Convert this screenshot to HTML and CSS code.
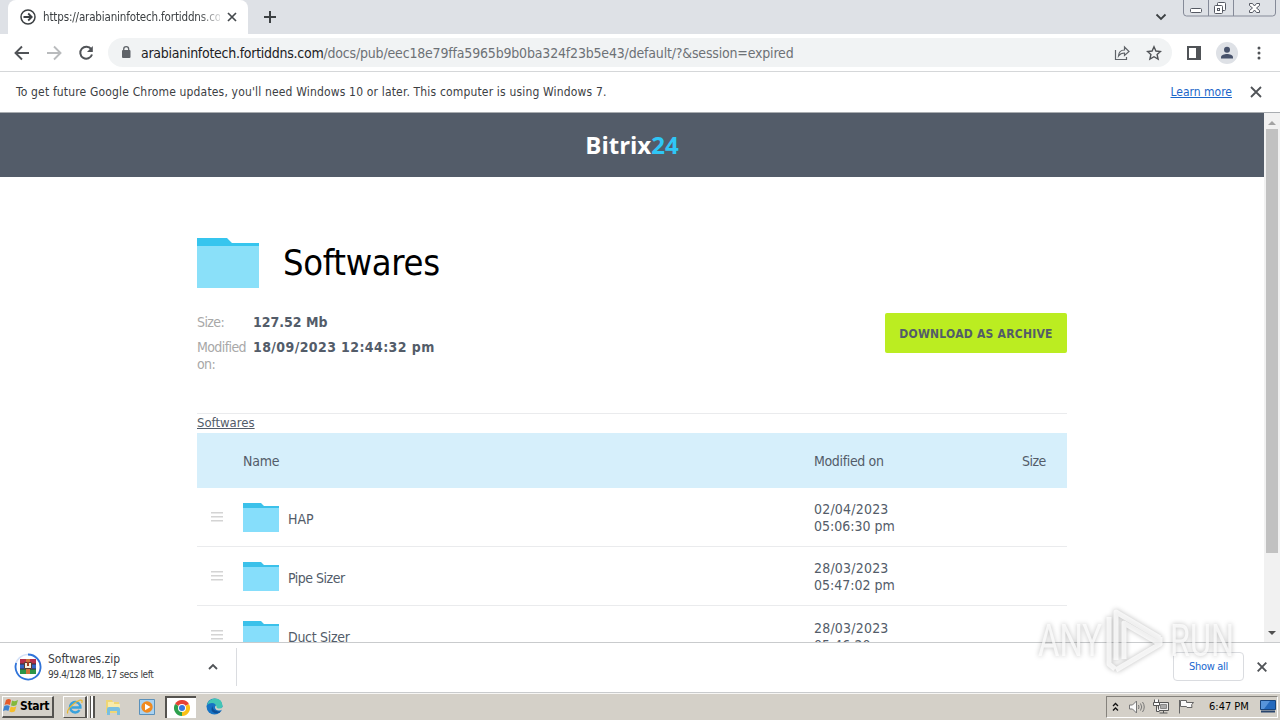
FILE: index.html
```html
<!DOCTYPE html>
<html lang="en">

<head>
    <meta charset="UTF-8">
    <meta name="viewport" content="width=device-width, initial-scale=1.0">
    <title>Softwares</title>
    <link rel="stylesheet" href="styles.css">
</head>

<body>
    <div class="screen">
        <!-- Tabs -->
        <div class="tabs">
            <div class="tab">
                <svg width="16" height="16" viewBox="0 0 16 16" fill="none" stroke="#3c4043" stroke-width="1.8"><circle cx="8" cy="8" r="7" stroke-width="1.5"/><path d="M3.5 8h8M8.2 4.5L11.7 8l-3.5 3.5"/></svg>
                <span class="tab-title">https://arabianinfotech.fortiddns.co</span>
                <svg width="10" height="10" viewBox="0 0 10 10" stroke="#45494d" stroke-width="1.7"><path d="M1 1l8 8M9 1L1 9"/></svg>
            </div>
            <svg class="new-tab" width="12" height="12" viewBox="0 0 12 12" stroke="#3c4043" stroke-width="2"><path d="M6 0v12M0 6h12"/></svg>
            <svg class="tab-search" width="12" height="8" viewBox="0 0 12 8" fill="none" stroke="#3c4043" stroke-width="1.8"><path d="M1.5 1.5L6 6l4.5-4.5"/></svg>
            <svg class="window-buttons" width="94" height="18" viewBox="0 0 94 18" fill="none" stroke="#858a98">
                <path d="M.5 0v13q0 3 3 3h86q3 0 3-3V0M25.5 0v16M50.5 0v16"/>
                <g stroke="#555963" fill="#fff"><rect x="7.5" y="8.5" width="11" height="4" rx="1"/><rect x="34.5" y="2.5" width="8" height="8" rx="1"/><rect x="31.5" y="5.5" width="8" height="8" rx="1"/><rect x="34.5" y="8.5" width="2" height="2"/><path d="M66.5 3.5h3l2 2.500 2-2.500h3v2L73.500 8l3 2.500v2h-3l-2-2.500-2 2.500h-3v-2l3-2.500-3-2.500z"/></g>
            </svg>
        </div>

        <!-- Address bar -->
        <div class="toolbar">
            <div class="nav">
                <svg width="16" height="16" viewBox="0 0 16 16" fill="none" stroke="#505357" stroke-width="1.9"><path d="M15 8H2M8 1.5L1.5 8 8 14.5"/></svg>
                <svg width="16" height="16" viewBox="0 0 16 16" fill="none" stroke="#b9bbbd" stroke-width="1.9"><path d="M1 8h13M8 1.5L14.5 8 8 14.5"/></svg>
                <svg width="16" height="16" viewBox="0 0 16 16" fill="none" stroke="#505357" stroke-width="2"><path d="M13.2 4.2A6 6 0 1 0 14 9.5"/><path d="M14.8 1v6H9z" fill="#505357" stroke="none"/></svg>
            </div>
            <div class="address">
                <svg width="10" height="13" viewBox="0 0 10 13"><rect x="1" y="4" width="8.5" height="8" rx="1" fill="#5f6368"/><path d="M2.7 5V3.2a2.500 2.500 0 0 1 5 0V5" fill="none" stroke="#5f6368" stroke-width="1.3"/></svg>
                <span class="url"><span class="host">arabianinfotech.fortiddns.com</span><span class="path">/docs/pub/eec18e79ffa5965b9b0ba324f23b5e43/default/?&amp;session=expired</span></span>
                <svg class="share" width="16" height="16" viewBox="0 0 16 16" fill="none" stroke="#5f6368" stroke-width="1.2"><path d="M1.5 5v9.500h11V12M4.500 11c.3-4 2.500-6 6-6V2l4.500 4.500-4.500 4V8c-2.500 0-4.500.8-6 3z"/></svg>
                <svg width="16" height="16" viewBox="0 0 16 16" fill="none" stroke="#505357" stroke-width="1.4"><path d="M8 1.8l1.900 4.200 4.600.5-3.400 3 1 4.500L8 11.700 3.900 14l1-4.500-3.400-3 4.600-.5z"/></svg>
            </div>
            <svg class="panel" width="15" height="14" viewBox="0 0 15 14"><path d="M1 1h12v12H1z" fill="none" stroke="#505357" stroke-width="2"/><path d="M9 1h5v12H9z" fill="#505357"/></svg>
            <svg class="avatar" width="22" height="22" viewBox="0 0 22 22"><circle cx="11" cy="11" r="11" fill="#dee1e6"/><circle cx="11" cy="7.8" r="3" fill="#47526b"/><path d="M5 16.5v-1.300c0-2.200 3.500-3.200 6-3.200s6 1 6 3.200v1.300z" fill="#47526b"/></svg>
            <svg class="dots" width="4" height="14" viewBox="0 0 4 14" fill="#505357"><circle cx="2" cy="2" r="1.5"/><circle cx="2" cy="7" r="1.5"/><circle cx="2" cy="12" r="1.5"/></svg>
        </div>

        <div class="infobar">
            <span class="info-text">To get future Google Chrome updates, you'll need Windows 10 or later. This computer is using Windows 7.</span>
            <span class="learn">Learn more</span>
            <svg width="12" height="12" viewBox="0 0 12 12" stroke="#505357" stroke-width="1.8"><path d="M1 1l10 10M11 1L1 11"/></svg>
        </div>

        <!-- Page -->
        <div class="viewport">
            <div class="page">
                <div class="header"><span class="brand">Bitrix<span class="brand-num">24</span></span></div>
                <div class="content">
                    <div class="title">
                        <svg width="62" height="50" viewBox="0 0 62 50"><path d="M0 0h30l5 5h27v5H0z" fill="#36c5ee"/><path d="M0 8h62v42H0z" fill="#8ae0f9"/></svg>
                        <span class="title-text">Softwares</span>
                    </div>
                    <div class="details">
                        <div class="meta">
                            <span class="meta-label">Size:</span>
                            <span class="meta-value">127.52 Mb</span>
                            <span class="meta-label">Modified on:</span>
                            <span class="meta-value date">18/09/2023 12:44:32 pm</span>
                        </div>
                        <div class="download"><span>DOWNLOAD AS ARCHIVE</span></div>
                    </div>
                    <div class="crumbs"><span class="crumb">Softwares</span></div>
                    <div class="row head">
                        <span class="name">Name</span>
                        <span class="modified">Modified on</span>
                        <span class="size">Size</span>
                    </div>
                    <div class="row">
                        <svg class="grip" width="12" height="10" viewBox="0 0 12 10" fill="#d4d4d4"><path d="M0 0h12v1.5H0zM0 4h12v1.5H0zM0 8h12v1.5H0z"/></svg>
                        <svg class="folder" width="36" height="29" viewBox="0 0 36 29"><path d="M0 0h18l3 3h15v3H0z" fill="#3bc1ea"/><path d="M0 5h36v24H0z" fill="#86defb"/></svg>
                        <span class="name hap">HAP</span>
                        <span class="modified"><span class="day">02/04/2023</span><br>05:06:30 pm</span>
                    </div>
                    <div class="row">
                        <svg class="grip" width="12" height="10" viewBox="0 0 12 10" fill="#d4d4d4"><path d="M0 0h12v1.5H0zM0 4h12v1.5H0zM0 8h12v1.5H0z"/></svg>
                        <svg class="folder" width="36" height="29" viewBox="0 0 36 29"><path d="M0 0h18l3 3h15v3H0z" fill="#3bc1ea"/><path d="M0 5h36v24H0z" fill="#86defb"/></svg>
                        <span class="name">Pipe Sizer</span>
                        <span class="modified"><span class="day">28/03/2023</span><br>05:47:02 pm</span>
                    </div>
                    <div class="row">
                        <svg class="grip" width="12" height="10" viewBox="0 0 12 10" fill="#d4d4d4"><path d="M0 0h12v1.5H0zM0 4h12v1.5H0zM0 8h12v1.5H0z"/></svg>
                        <svg class="folder" width="36" height="29" viewBox="0 0 36 29"><path d="M0 0h18l3 3h15v3H0z" fill="#3bc1ea"/><path d="M0 5h36v24H0z" fill="#86defb"/></svg>
                        <span class="name duct">Duct Sizer</span>
                        <span class="modified last"><span class="day">28/03/2023</span><br>05:46:20 pm</span>
                    </div>
                </div>
            </div>
            <div class="scrollbar">
                <svg width="8" height="4" viewBox="0 0 8 4"><path d="M0 4l4-4 4 4z" fill="#a3a3a3"/></svg>
                <div class="thumb"></div>
                <svg width="8" height="4" viewBox="0 0 8 4"><path d="M0 0h8L4 4z" fill="#505050"/></svg>
            </div>
        </div>

        <!-- Downloads -->
        <div class="downloads">
            <svg class="zip" width="28" height="28" viewBox="0 0 28 28">
                <circle cx="14" cy="14" r="12.5" fill="none" stroke="#d5e2f8" stroke-width="1.6"/>
                <path d="M14 1.500A12.500 12.500 0 1 1 2.200 10" fill="none" stroke="#2f73d9" stroke-width="1.8"/>
                <path d="M6 6h16v5H6z" fill="#b52f4b"/><path d="M6 11h16v5H6z" fill="#3565c5"/><path d="M6 16h16v5H6z" fill="#2b9448"/>
                <path d="M6 11h16M6 16h16" stroke="#352b34"/>
                <path d="M12 6h4v15h-4z" fill="#d0703a"/><path d="M10.5 9.500h7v6h-7z" fill="#f4eedc" stroke="#5a3a30"/><path d="M14 9v4" stroke="#a03c27" stroke-width="2"/>
            </svg>
            <div class="file">
                <span class="file-name">Softwares.zip</span>
                <span class="file-info">99.4/128 MB, 17 secs left</span>
            </div>
            <svg class="chevron" width="10" height="7" viewBox="0 0 10 7" fill="none" stroke="#505357" stroke-width="1.8"><path d="M1 6l4-4 4 4"/></svg>
            <div class="divider"></div>
            <div class="show-all"><span>Show all</span></div>
            <svg width="10" height="10" viewBox="0 0 10 10" stroke="#505357" stroke-width="1.9"><path d="M.7.7l8.600 8.600M9.300.7L.7 9.300"/></svg>
        </div>

        <!-- Taskbar -->
        <div class="taskbar">
            <div class="start">
                <svg width="16" height="16" viewBox="0 0 16 16"><path d="M3 2q3-2 5 0L7 7Q4 5.500 1.500 7z" fill="#e55b2b"/><path d="M9 2.500q3 1.500 6-.5l-1.500 5Q11 8.500 8 7.500z" fill="#83b93b"/><path d="M1.300 8Q4 6.500 6.700 8l-1.300 5Q3 11.500 0 13z" fill="#3c82d0"/><path d="M7.700 8.500q3 1.500 5.700-.3l-1.500 5q-3 1.800-5.500.3z" fill="#f5bd2b"/></svg>
                <span>Start</span>
            </div>
            <div class="task ie">
                <svg width="18" height="18" viewBox="0 0 20 20" fill="none"><path d="M15 13.500A5.800 5.800 0 1 1 16 10.500H6" stroke="#39a2dc" stroke-width="2.7"/><path d="M2 17C0 14 8 5 15 2.500q4-1 2.500 3" stroke="#e9b92f" stroke-width="1.4"/></svg>
            </div>
            <div class="stack"></div>
            <svg class="explorer" width="18" height="18" viewBox="0 0 18 18"><path d="M2 2h6l1 2h6v11H2z" fill="#efd675"/><path d="M4 4h6v2h6v7H4z" fill="#f8ebaa"/><path d="M3 17v-6q0-2 2-2h9q2 0 2 2v6h-3v-4H6v4z" fill="#79bfe0"/></svg>
            <svg class="media" width="16" height="16" viewBox="0 0 16 16"><path d="M.5.5h15v15H.5z" fill="#a9d2f1" stroke="#5a91bb"/><circle cx="8" cy="8" r="5.7" fill="#f08a20"/><path d="M6 4.700v6.600L11.500 8z" fill="#fff"/></svg>
            <div class="task chrome">
                <svg width="16" height="16" viewBox="0 0 16 16"><path d="M8 8L1.070 4A8 8 0 0 1 14.930 4z" fill="#e64235"/><path d="M8 8l6.930-4A8 8 0 0 1 8 16z" fill="#fbc116"/><path d="M8 8v8A8 8 0 0 1 1.070 4z" fill="#2da04d"/><circle cx="8" cy="8" r="4" fill="#fff"/><circle cx="8" cy="8" r="3" fill="#3677df"/></svg>
            </div>
            <svg class="edge" width="17" height="17" viewBox="0 0 17 17"><circle cx="8.5" cy="8.5" r="8" fill="#1673c4"/><path d="M1 7Q3 .5 9 .5q7 0 7.500 7 0 4-5 4-3-.5-1.500-3Q10 5 6 5 3 5 1 7z" fill="#42c5b5"/><path d="M6.500 8q-3 5 2 7 4 1 7-2-2 1-5 0-4-1-4-5z" fill="#0e4f96"/><path d="M10 7.500q-1 .5-1 2 .5 3 4 3 2 0 4-1.500v-2q-2 2-5 1.500-2-.5-1.500-2z" fill="#d4d0c8"/></svg>
            <div class="tray">
                <svg width="7" height="10" viewBox="0 0 7 10" fill="none" stroke="#111" stroke-width="1.3"><path d="M1 4l2.500-2.500L6 4M1 8.500L3.500 6 6 8.500"/></svg>
                <svg class="volume" width="16" height="14" viewBox="0 0 16 14" fill="none" stroke="#777"><path d="M.5 5v4h3L7.500 13V1L3.500 5z" fill="#fafafa"/><path d="M9.500 5q1 2 0 4M11.500 3.500q2.500 3.500 0 7M13.500 2q3.500 5 0 10"/></svg>
                <svg class="network" width="17" height="15" viewBox="0 0 17 15" fill="none" stroke="#555"><path d="M5.500 3.500h10v8h-10z" fill="#eee"/><path d="M7.500 5.500h6v4h-6z" fill="#aaa" stroke="#888"/><path d="M6.500 14h8M10.500 12v2M1.500.5v3h4v-3M.5 3.500h6v3H.5zM3.500 7v5.500h3" fill="#fafafa"/></svg>
                <svg class="flag" width="17" height="15" viewBox="0 0 17 15" fill="#fafafa" stroke="#666"><path d="M1.500 1v13.500M2.500 1.500h6v2h7q-3 2-1.500 5h-5l-.5-1h-6z"/></svg>
                <span class="clock">6:47 PM</span>
                <svg class="desktop" width="16" height="13" viewBox="0 0 16 13"><path d="M.5.5h15v9H.5z" fill="#2469bd" stroke="#17447d"/><path d="M1 1h9L4 9H1z" fill="#5794da"/><path d="M1 10.500h14v2H1z" fill="#29456d"/></svg>
            </div>
        </div>

        <!-- Watermark -->
        <svg class="watermark" width="210" height="76" viewBox="0 0 210 76">
            <g class="mark">
                <text x="8" y="53" textLength="64" lengthAdjust="spacingAndGlyphs">ANY</text>
                <text x="140" y="53" textLength="64" lengthAdjust="spacingAndGlyphs">RUN</text>
                <path d="M79 14v47l6 5M86 57V9l44 26M94 56V20l36 21L86 67M130 34v8"/>
            </g>
        </svg>
    </div>
</body>

</html>
```
FILE: styles.css
```css
body {
    margin: 0;
    font-family: "DejaVu Sans Condensed", "DejaVu Sans", Tahoma, sans-serif;
    font-size: 12px;
    color: #3c4043;
    white-space: nowrap;
}

svg {
    flex-shrink: 0;
}

.screen {
    position: relative;
    width: 1280px;
    height: 720px;
    overflow: hidden;
    display: flex;
    flex-direction: column;
    background: white;
}

/* tabs */
.tabs {
    height: 34px;
    display: flex;
    background: #dee1e6;
    flex-shrink: 0;
}

.tab {
    box-sizing: border-box;
    width: 240px;
    margin-left: 8px;
    padding: 0 12px;
    display: flex;
    align-items: center;
    background: white;
    border-radius: 8px 8px 0 0;
}

.tab-title {
    width: 177px;
    margin: 0 7px 0 7px;
    flex-shrink: 0;
    font-size: 11.5px;
    letter-spacing: -0.15px;
    -webkit-mask-image: linear-gradient(to right, black 155px, transparent 182px);
}

.new-tab {
    margin: 11px 0 0 16px;
}

.tab-search {
    margin: 13px 16px 0 auto;
}

.window-buttons {
    margin-right: 3px;
}

/* toolbar */
.toolbar {
    height: 37px;
    display: flex;
    align-items: center;
    border-bottom: 1px solid #d5d7d9;
    flex-shrink: 0;
}

.nav {
    display: flex;
    gap: 16px;
    margin-left: 14px;
}

.address {
    box-sizing: border-box;
    width: 1064px;
    height: 29px;
    margin-left: 14px;
    padding: 0 10px 0 13px;
    display: flex;
    align-items: center;
    background: #f1f3f4;
    border-radius: 15px;
}

.url {
    margin-left: 10px;
    font-size: 14px;
}

.host {
    color: #202124;
    letter-spacing: -0.27px;
}

.path {
    color: #6d7176;
    letter-spacing: -0.18px;
}

.share {
    margin: 0 16px 0 auto;
}

.panel {
    margin-left: 15px;
}

.avatar {
    margin-left: 14px;
}

.dots {
    margin-left: 19px;
}

/* update notice */
.infobar {
    height: 40px;
    padding: 0 18px 0 16px;
    display: flex;
    align-items: center;
    border-bottom: 1px solid #a9adb1;
    flex-shrink: 0;
}

.info-text {
    letter-spacing: 0.165px;
}

.learn {
    margin: 0 18px 0 auto;
    color: #1b66c9;
    text-decoration: underline;
}

/* page */
.viewport {
    height: 529px;
    display: flex;
    overflow: hidden;
    flex-shrink: 0;
}

.page {
    width: 1264px;
}

.header {
    height: 64px;
    display: flex;
    align-items: center;
    justify-content: center;
    background: #535c69;
    color: white;
    font-size: 24px;
    font-weight: bold;
}

.brand {
    margin-top: -2px;
    font-family: "Open Sans", sans-serif;
}

.brand-num {
    color: #2fc6f6;
}

.content {
    width: 870px;
    margin: 0 auto;
    padding-top: 61px;
    color: #535c69;
    font-size: 14px;
}

.title {
    height: 50px;
    display: flex;
    align-items: center;
    color: black;
    font-size: 36px;
}

.title-text {
    margin: -2px 0 0 24px;
    letter-spacing: -0.3px;
}

.details {
    height: 100px;
    margin-top: 25px;
    display: flex;
    justify-content: space-between;
    border-bottom: 1px solid #eaebed;
}

.meta {
    display: grid;
    grid-template-columns: 56px 190px;
    align-content: start;
    row-gap: 8px;
    padding-top: 1px;
    line-height: 17px;
}

.meta-label {
    width: 52px;
    color: #a8a8a8;
    letter-spacing: -0.6px;
    white-space: normal;
}

.meta-value {
    font-weight: bold;
}

.date {
    letter-spacing: 0.4px;
}

.download {
    width: 182px;
    height: 40px;
    display: flex;
    align-items: center;
    justify-content: center;
    background: #bbed21;
    border-radius: 2px;
    font-size: 12px;
    font-weight: bold;
    letter-spacing: 0.25px;
}

.download span {
    padding-top: 1px;
}

.crumbs {
    height: 19px;
    line-height: 18px;
    font-size: 13px;
}

.crumb {
    text-decoration: underline;
}

.row {
    height: 58px;
    display: grid;
    grid-template-columns: 46px 45px 526px 208px 45px;
    align-items: center;
    border-bottom: 1px solid #eaebed;
    line-height: 17px;
}

.row .name {
    grid-column: 3;
    padding-top: 4px;
    letter-spacing: -0.5px;
}

.row .hap {
    letter-spacing: 0;
}

.row .duct {
    letter-spacing: -0.3px;
}

.row .modified {
    grid-column: 4;
    padding-top: 2px;
}

.row .last {
    padding-top: 4px;
}

.day {
    letter-spacing: 0.2px;
}

.grip {
    margin-left: 14px;
}

.head {
    height: 55px;
    border-bottom: none;
    background: #d6effb;
}

.head .name {
    grid-column: 2;
    padding-top: 1px;
    letter-spacing: -0.2px;
}

.head .modified {
    padding-top: 1px;
    letter-spacing: -0.35px;
}

.head .size {
    padding-top: 1px;
    letter-spacing: -0.5px;
}

.scrollbar {
    width: 16px;
    display: flex;
    flex-direction: column;
    align-items: center;
    background: #f1f1f1;
    padding: 8px 0 7px;
    box-sizing: border-box;
}

.thumb {
    width: 12px;
    height: 424px;
    margin: 4px 0 auto;
    background: #c1c1c1;
}

/* downloads */
.downloads {
    box-sizing: border-box;
    height: 51px;
    padding: 0 13px 2px 14px;
    display: flex;
    align-items: center;
    border-top: 1px solid #c9cbcd;
    border-bottom: 1px solid #c9cbcd;
    background: white;
    flex-shrink: 0;
}

.file {
    width: 160px;
    margin-left: 6px;
    display: flex;
    flex-direction: column;
    line-height: 16px;
}

.file-info {
    font-size: 10px;
    letter-spacing: -0.35px;
}

.chevron {
    margin-right: 18px;
}

.divider {
    width: 1px;
    height: 38px;
    background: #dadce0;
}

.show-all {
    box-sizing: border-box;
    width: 71px;
    height: 29px;
    margin: 0 13px 0 auto;
    display: flex;
    align-items: center;
    justify-content: center;
    border: 1px solid #dadce0;
    border-radius: 4px;
    color: #1a67cf;
    font-size: 11px;
    letter-spacing: -0.3px;
}

/* taskbar */
.taskbar {
    height: 27px;
    display: flex;
    align-items: center;
    background: #d4d0c8;
    box-shadow: inset 0 1px #f7f6f4;
    color: black;
}

.start {
    box-sizing: border-box;
    width: 52px;
    height: 22px;
    margin-left: 2px;
    display: flex;
    align-items: center;
    gap: 1px;
    border: 1px solid white;
    border-right: 2px solid #55534f;
    border-bottom: 2px solid #55534f;
    font-size: 12px;
    font-weight: bold;
    letter-spacing: -0.3px;
}

.task {
    box-sizing: border-box;
    height: 22px;
    display: flex;
    align-items: center;
    justify-content: center;
}

.ie {
    width: 24px;
    margin-left: 9px;
    border: 1px solid white;
    border-right: 2px solid #55534f;
    border-bottom: 1px solid #55534f;
}

.stack {
    box-sizing: border-box;
    width: 8px;
    height: 22px;
    border-left: 1px solid white;
    border-right: 2px solid #55534f;
    background: linear-gradient(to right, #d4d0c8 2px, #55534f 2px, #55534f 3px, #fff 3px);
}

.explorer {
    margin-left: 9px;
}

.media {
    margin: 0 10px 0 17px;
}

.chrome {
    width: 31px;
    background: white;
    border: 1px solid #55534f;
    border-width: 2px 0 0 2px;
}

.edge {
    margin-left: 10px;
}

.tray {
    box-sizing: border-box;
    width: 172px;
    height: 22px;
    margin: 0 2px 0 auto;
    padding-left: 5px;
    display: flex;
    align-items: center;
    border: 1px solid #85827c;
    border-right-color: white;
    border-bottom-color: white;
}

.volume {
    margin-left: 10px;
}

.network,
.flag {
    margin-left: 8px;
}

.clock {
    margin-left: 14px;
    font-size: 11px;
}

.desktop {
    margin: 0 1px 0 auto;
}

.watermark {
    position: absolute;
    left: 1030px;
    top: 603px;
}

.mark {
    font-family: Roboto, sans-serif;
    font-size: 45px;
    fill: rgba(255, 255, 255, 0.75);
    filter: drop-shadow(0 0 2.5px rgba(0, 0, 0, 0.35));
}

.mark path {
    fill: none;
    stroke: rgba(255, 255, 255, 0.75);
    stroke-width: 5;
    stroke-linejoin: round;
}
```
